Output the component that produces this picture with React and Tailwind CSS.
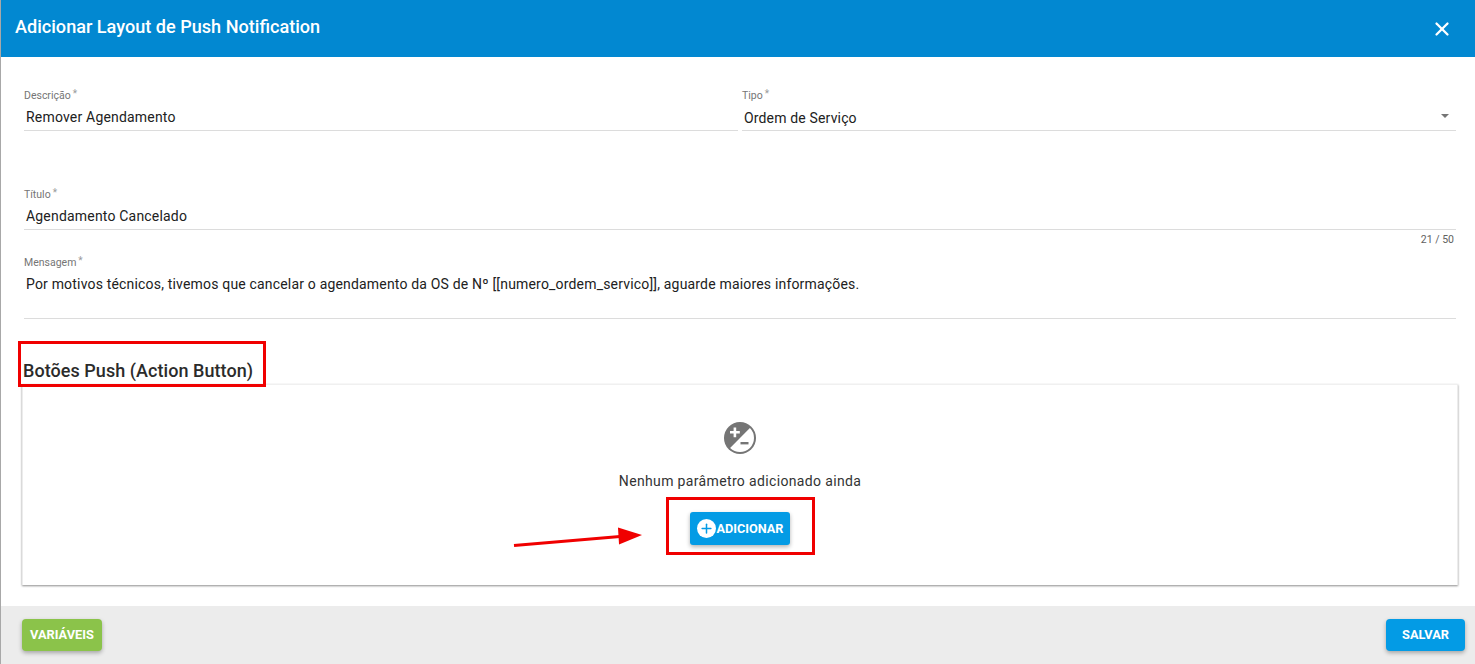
import React from 'react'
import { X, Plus } from 'lucide-react'

const Field = ({ label, className = '', children }) => (
  <div className={className}>
    <label className="block h-[15px] text-[10.5px] leading-[15px] text-[#757575]">
      {label}
      <span className="relative top-[-2px] ml-[2px] text-[10px] text-[#9a9a9a]">*</span>
    </label>
    {children}
  </div>
)

const ExposureIcon = () => (
  <svg width="32" height="32" viewBox="0 0 32 32">
    <circle cx="16" cy="16" r="16" fill="#757575" />
    <path d="M25.9 6.1 A14 14 0 0 1 6.1 25.9 Z" fill="#ffffff" />
    <path d="M6 9h3.6v-3.6h2.6v3.6h3.6v2.6h-3.6v3.6h-2.6v-3.6h-3.6z" fill="#ffffff" />
    <rect x="16.5" y="20" width="8" height="2.4" fill="#757575" />
  </svg>
)

const App = () => {
  return (
    <div className="relative flex h-[664px] w-[1475px] flex-col overflow-hidden border-l border-[#a8a8a8] bg-white font-['Roboto',sans-serif] text-[#212121]">

      {/* Header */}
      <header className="flex h-[57px] shrink-0 items-center justify-between bg-[#0288d1] pl-[14px] pr-[22px] text-white">
        <h1 className="-mt-[2px] text-[18.1px] font-medium leading-none">Adicionar Layout de Push Notification</h1>
        <X className="h-[22px] w-[22px]" strokeWidth={2.5} />
      </header>

      {/* Form */}
      <main className="flex flex-1 flex-col pl-[23px] pr-[19px] pt-[31px]">
        <div className="flex gap-[4px]">
          <Field label="Descrição" className="flex-1">
            <div className="h-[28px] border-b border-[#dcdcdc] pl-[2px] pt-[6px] text-[14px] leading-[17px] tracking-[0.19px]">Remover Agendamento</div>
          </Field>
          <Field label="Tipo" className="flex-1">
            <div className="flex h-[28px] items-start justify-between border-b border-[#dcdcdc] pl-[2px] pr-[7px] pt-[7px] text-[14px] leading-[17px] tracking-[0.16px]">
              <span>Ordem de Serviço</span>
              <span className="mt-[4px] h-0 w-0 border-x-[4px] border-t-[4px] border-x-transparent border-t-[#757575]" />
            </div>
          </Field>
        </div>

        <Field label="Título" className="mt-[56px]">
          <div className="h-[28px] border-b border-[#dcdcdc] pl-[2px] pt-[6px] text-[14px] leading-[17px] tracking-[0.19px]">Agendamento Cancelado</div>
        </Field>
        <div className="mr-[2px] mt-[3px] h-[13px] text-right text-[10.5px] leading-[13px] text-[#616161]">21 / 50</div>

        <Field label="Mensagem" className="mt-[9px]">
          <div className="h-[49px] border-b border-[#dcdcdc] pl-[2px] pt-[6px] text-[14px] leading-[17px] tracking-[0.18px]">
            Por motivos técnicos, tivemos que cancelar o agendamento da OS de Nº [[numero_ordem_servico]], aguarde maiores informações.
          </div>
        </Field>

        <h2 className="-ml-px mt-[40px] h-[24px] text-[18px] font-medium leading-[24px] tracking-[0.05px] text-[#2b2b2b]">Botões Push (Action Button)</h2>

        {/* Action buttons card */}
        <section className="-ml-[2px] -mr-[2px] mt-[1px] flex h-[201px] flex-col items-center border border-x-[#ececec] border-b-0 border-t-[#f0f0f0] bg-white pt-[37px] shadow-[0_1px_2px_rgba(0,0,0,0.45)]">
          <ExposureIcon />
          <p className="mt-[17px] text-[14px] leading-[20px] tracking-[0.35px] text-[#333333]">Nenhum parâmetro adicionado ainda</p>
          <button className="mt-[21px] flex h-[33px] w-[100px] items-center justify-center gap-[1px] rounded-[3px] bg-[#039be5] text-[12.7px] font-bold text-white shadow-[0_2px_4px_rgba(0,0,0,0.3)]">
            <span className="flex h-[19px] w-[19px] items-center justify-center rounded-full bg-white">
              <Plus className="h-[15px] w-[15px] text-[#039be5]" strokeWidth={2.4} />
            </span>
            ADICIONAR
          </button>
        </section>
      </main>

      {/* Footer */}
      <footer className="flex h-[58px] shrink-0 items-start justify-between bg-[#ececec] pl-[21px] pr-[10px] pt-[13px]">
        <button className="h-[32px] w-[80px] rounded-[4px] bg-[#8bc34a] text-[12.8px] font-bold text-white shadow-[0_2px_4px_rgba(0,0,0,0.3)]">VARIÁVEIS</button>
        <button className="h-[32px] w-[79px] rounded-[4px] bg-[#039be5] text-[12.8px] font-bold text-white shadow-[0_2px_4px_rgba(0,0,0,0.3)]">SALVAR</button>
      </footer>

      {/* Annotations over the screenshot */}
      <div className="pointer-events-none absolute left-[17px] top-[341px] h-[46px] w-[248px] border-[3px] border-[#f00000]" />
      <div className="pointer-events-none absolute left-[665px] top-[497px] h-[58px] w-[149px] border-[3px] border-[#f00000]" />
      <svg className="pointer-events-none absolute left-[511px] top-[524px]" width="132" height="24" viewBox="0 0 132 24">
        <path d="M2 21.5 L108 12.5" stroke="#f00000" strokeWidth="3" fill="none" />
        <path d="M106 3.5 L130 11 L107 20.5 Z" fill="#f00000" />
      </svg>
    </div>
  )
}

export default App
